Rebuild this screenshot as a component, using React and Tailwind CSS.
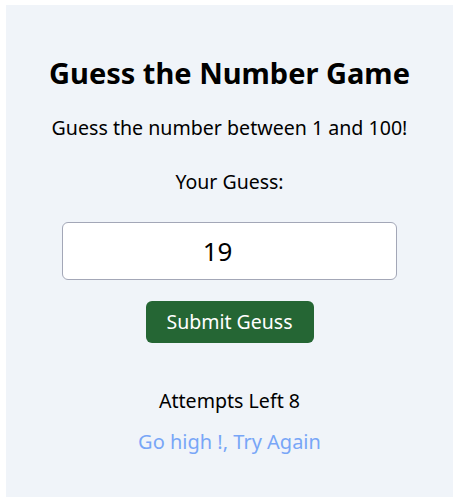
export default function App() {
    return (
        <div className="min-h-screen bg-white px-[6px] pt-[5px] pb-[5px]" style={{ fontFamily: '"Noto Sans", "Open Sans", sans-serif' }}>
            <div className="h-[492px] w-[447px] bg-[#f0f4f9] flex flex-col items-center text-black">
                <h1 className="mt-[48px] text-[29px] font-bold leading-[40px]">Guess the Number Game</h1>
                <p className="mt-[21px] text-[19.6px] leading-[28px]">Guess the number between 1 and 100!</p>
                <label className="mt-[26px] text-[19.5px] leading-[28px]">Your Guess:</label>
                <input
                    type="text"
                    defaultValue="19"
                    className="mt-[26px] h-[58px] w-[335px] rounded-[6px] border border-[#a3a7b7] bg-white pr-[24px] text-center text-[26px] outline-none"
                />
                <button className="mt-[21px] h-[42px] w-[168px] rounded-[6px] bg-[#256634] text-[19.5px] text-white">
                    Submit Geuss
                </button>
                <p className="mt-[44px] text-[19.6px] leading-[28px]">Attempts Left 8</p>
                <p className="mt-[13px] text-[20px] leading-[28px] text-[#78a6f7]">Go high !, Try Again</p>
            </div>
        </div>
    );
}
